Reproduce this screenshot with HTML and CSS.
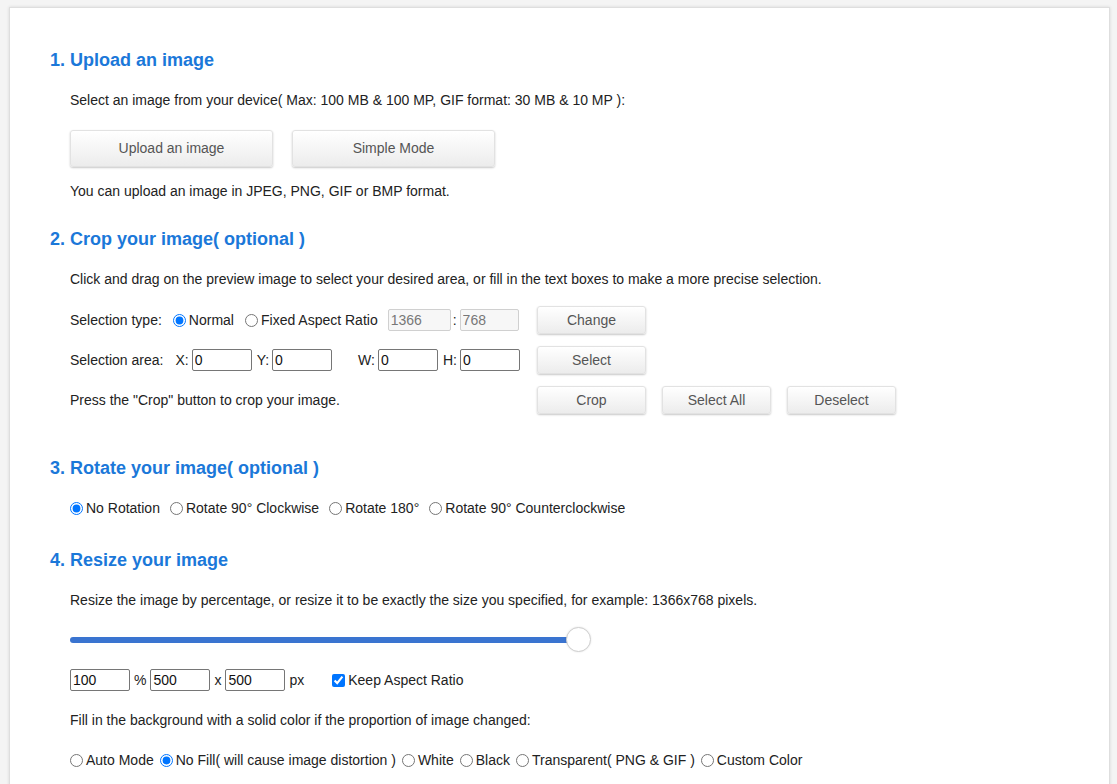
FILE: index.html
```html
<!DOCTYPE html>
<html lang="en">
<head>
<meta charset="utf-8">
<title>Resize image</title>
<link rel="stylesheet" href="styles.css">
</head>
<body>
<div class="page">
  <h2 class="title">1. Upload an image</h2>
  <div class="section">
    <p class="line">Select an image from your device( Max: 100 MB &amp; 100 MP, GIF format: 30 MB &amp; 10 MP ):</p>
    <div class="big-buttons">
      <button class="btn big">Upload an image</button>
      <button class="btn big">Simple Mode</button>
    </div>
    <p class="line after-big">You can upload an image in JPEG, PNG, GIF or BMP format.</p>
  </div>

  <h2 class="title t2">2. Crop your image( optional )</h2>
  <div class="section">
    <p class="line">Click and drag on the preview image to select your desired area, or fill in the text boxes to make a more precise selection.</p>
    <div class="crop-rows">
      <div class="crop-row">
        <div class="crop-left">
          <span class="lbl">Selection type:</span>
          <label class="opt o-normal"><input type="radio" name="st" checked>Normal</label>
          <label class="opt o-fixed"><input type="radio" name="st">Fixed Aspect Ratio</label>
          <input class="tb dis d1" type="text" value="1366" disabled>
          <span class="sep">:</span>
          <input class="tb dis d2" type="text" value="768" disabled>
        </div>
        <button class="btn sm">Change</button>
      </div>
      <div class="crop-row">
        <div class="crop-left">
          <span class="lbl">Selection area:</span>
          <span class="k kx">X:</span><input class="tb" type="text" value="0">
          <span class="k ky">Y:</span><input class="tb" type="text" value="0">
          <span class="k kw">W:</span><input class="tb" type="text" value="0">
          <span class="k kh">H:</span><input class="tb" type="text" value="0">
        </div>
        <button class="btn sm">Select</button>
      </div>
      <div class="crop-row">
        <div class="crop-left">
          <span class="lbl">Press the "Crop" button to crop your image.</span>
        </div>
        <div class="btn-group">
          <button class="btn sm">Crop</button>
          <button class="btn sm">Select All</button>
          <button class="btn sm">Deselect</button>
        </div>
      </div>
    </div>
  </div>

  <h2 class="title t3">3. Rotate your image( optional )</h2>
  <div class="section">
    <div class="radios rot">
      <label class="opt"><input type="radio" name="rot" checked>No Rotation</label>
      <label class="opt"><input type="radio" name="rot">Rotate 90° Clockwise</label>
      <label class="opt"><input type="radio" name="rot">Rotate 180°</label>
      <label class="opt"><input type="radio" name="rot">Rotate 90° Counterclockwise</label>
    </div>
  </div>

  <h2 class="title t4">4. Resize your image</h2>
  <div class="section">
    <p class="line">Resize the image by percentage, or resize it to be exactly the size you specified, for example: 1366x768 pixels.</p>
    <div class="slider">
      <div class="track"></div>
      <div class="thumb"></div>
    </div>
    <div class="size-row">
      <input class="tb" type="text" value="100">
      <span class="unit">%</span>
      <input class="tb" type="text" value="500">
      <span class="unit">x</span>
      <input class="tb" type="text" value="500">
      <span class="unit u-px">px</span>
      <label class="opt keep"><input type="checkbox" checked>Keep Aspect Ratio</label>
    </div>
    <p class="line fill-text">Fill in the background with a solid color if the proportion of image changed:</p>
    <div class="radios fillopts">
      <label class="opt"><input type="radio" name="fill">Auto Mode</label>
      <label class="opt"><input type="radio" name="fill" checked>No Fill( will cause image distortion )</label>
      <label class="opt"><input type="radio" name="fill">White</label>
      <label class="opt"><input type="radio" name="fill">Black</label>
      <label class="opt"><input type="radio" name="fill">Transparent( PNG &amp; GIF )</label>
      <label class="opt"><input type="radio" name="fill">Custom Color</label>
    </div>
  </div>
</div>
</body>
</html>
```

FILE: styles.css
```css
html {
  overflow: hidden;
}
body {
  margin: 0;
  background: #f4f4f4;
  font-family: "Liberation Sans", Arial, sans-serif;
  font-size: 14px;
  color: #222;
}
.page {
  margin: 7px 7px 0 9px;
  background: #fff;
  border: 1px solid #dedede;
  box-shadow: 0 0 3px rgba(0, 0, 0, 0.12);
  padding: 40px 40px 200px 40px;
}
.title {
  margin: 0;
  font-size: 18px;
  line-height: 24px;
  font-weight: bold;
  color: #1b78d9;
}
.t2 { margin-top: 26px; }
.t3 { margin-top: 42px; }
.t4 { margin-top: 30px; }
.section {
  padding-left: 20px;
  padding-top: 18px;
}
.line {
  margin: 0;
  line-height: 20px;
}
.big-buttons {
  display: flex;
  gap: 19px;
  margin-top: 20px;
}
.btn {
  font-family: "Liberation Sans", Arial, sans-serif;
  font-size: 14px;
  color: #555;
  background: linear-gradient(#ffffff, #ececec);
  border: 1px solid #e2e2e2;
  border-radius: 3px;
  box-shadow: 0 1px 2px rgba(0, 0, 0, 0.22);
  padding: 0 0 1px 0;
  cursor: pointer;
}
.btn.big {
  width: 203px;
  height: 37px;
}
.after-big {
  margin-top: 14px;
}
.crop-rows {
  display: flex;
  flex-direction: column;
  gap: 12px;
  margin-top: 17px;
}
.crop-row {
  display: flex;
  align-items: center;
  height: 28px;
}
.crop-left {
  width: 467px;
  display: flex;
  align-items: center;
}
.btn.sm {
  width: 109px;
  height: 28px;
}
.btn-group {
  display: flex;
  gap: 16px;
}
.opt {
  display: inline-flex;
  align-items: center;
  white-space: nowrap;
}
.opt input {
  margin: 0 3px 0 0;
  width: 13px;
  height: 13px;
}
.o-normal { margin-left: 11px; }
.o-fixed { margin-left: 11px; }
.tb {
  box-sizing: border-box;
  width: 60px;
  height: 22px;
  border: 1px solid #767676;
  border-radius: 2px;
  padding: 1px 2px;
  font-family: "Liberation Sans", Arial, sans-serif;
  font-size: 14px;
  color: #111;
  margin: 0;
}
.tb.dis {
  border-color: #d0d0d0;
  background: #f7f7f7;
  color: #777;
}
.tb.d1 { width: 63px; margin-left: 10px; }
.tb.d2 { width: 59px; }
.sep {
  margin: 0 3px 0 2px;
}
.k { margin-right: 3px; }
.kx { margin-left: 12px; }
.ky { margin-left: 5px; }
.kw { margin-left: 26px; }
.kh { margin-left: 5px; }
.radios {
  display: flex;
  align-items: center;
  line-height: 20px;
}
.rot { gap: 10px; }
.fillopts { gap: 6px; margin-top: 20px; }
.slider {
  position: relative;
  width: 520px;
  height: 24px;
  margin-top: 18px;
}
.track {
  position: absolute;
  left: 0;
  right: 0;
  top: 9px;
  height: 6px;
  border-radius: 3px;
  background: #3a74d0;
}
.thumb {
  position: absolute;
  right: -1px;
  top: -1px;
  width: 23px;
  height: 23px;
  border-radius: 50%;
  background: #fff;
  border: 1px solid #cfcfcf;
  box-shadow: 0 0 2px rgba(0, 0, 0, 0.12);
}
.size-row {
  display: flex;
  align-items: center;
  height: 24px;
  margin-top: 16px;
}
.unit { margin: 0 4px 0 4px; }
.u-px { margin: 0 0 0 4px; }
.keep { margin-left: 28px; }
.fill-text { margin-top: 18px; }
```
